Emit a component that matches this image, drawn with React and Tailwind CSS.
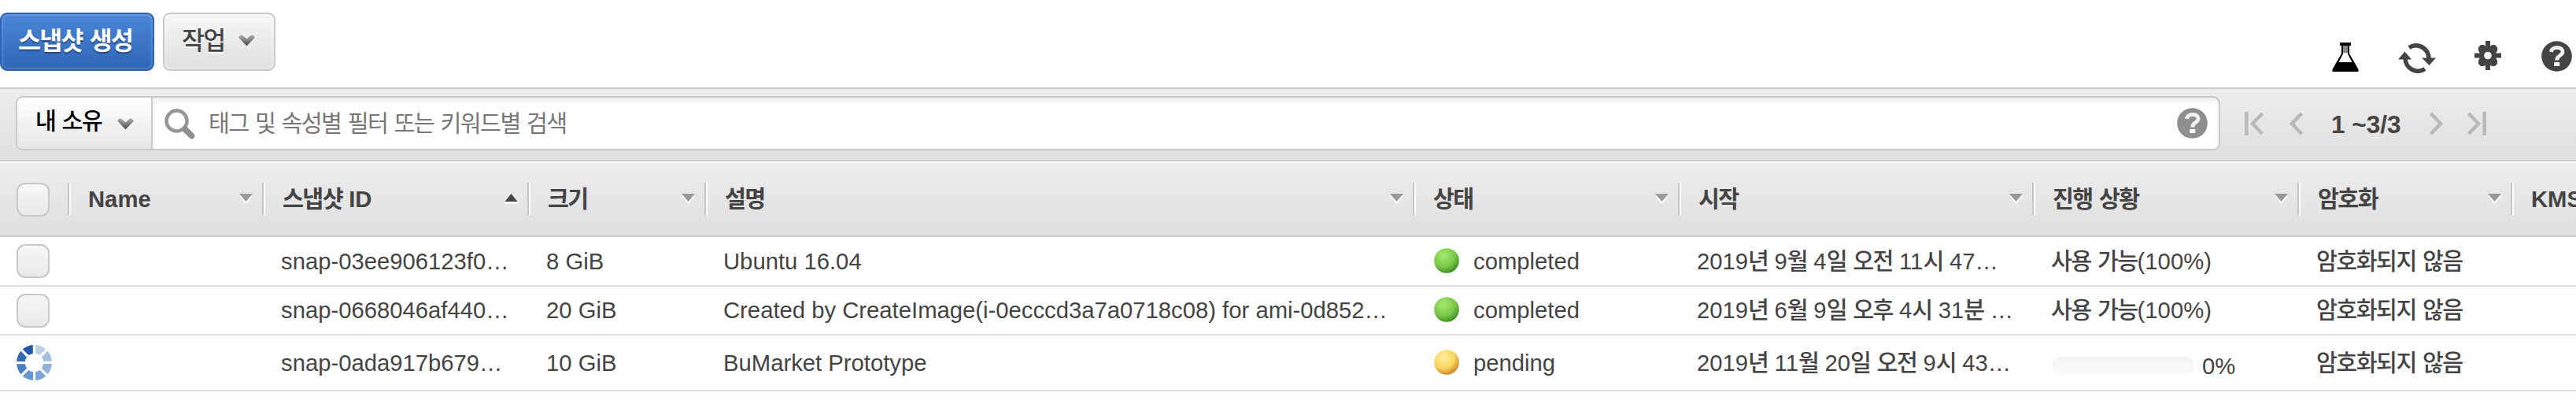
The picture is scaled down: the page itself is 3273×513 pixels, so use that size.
const KR = "font-['Liberation_Sans','Noto_Sans_CJK_KR',sans-serif]";

// Hangul runs are set slightly tighter than the Latin ones.
function T({ children }) {
  return (
    <span>
      {String(children)
        .split(/([\uac00-\ud7a3]+)/)
        .filter(Boolean)
        .map((s, i) => (
          <span key={i} className={/[\uac00-\ud7a3]/.test(s) ? 'tracking-[-0.053em]' : ''}>{s}</span>
        ))}
    </span>
  );
}

function Chevron({ className }) {
  return (
    <svg width="21" height="15" viewBox="0 0 21 15" className={className}>
      <defs>
        <linearGradient id="chev" x1="0" y1="0" x2="0" y2="1">
          <stop offset="0" stopColor="#b0b0b0" />
          <stop offset="1" stopColor="#484848" />
        </linearGradient>
      </defs>
      <path d="M0 3.5 L2.500 0.500 H5 L10.500 5.500 L16 0.500 H18.500 L21 3.500 L10.500 14.500 Z" fill="url(#chev)" />
    </svg>
  );
}

function Help({ className, fill }) {
  return (
    <svg width="39" height="39" viewBox="0 0 39 39" className={className}>
      <circle cx="19.5" cy="19.5" r="19.3" fill={fill} />
      <path d="M12.500 14 C13 6.500 27 6.500 27 14 C27 18.500 19.600 18.500 19.600 24.500" fill="none" stroke="#f2f2f2" strokeWidth="4.800" />
      <rect x="16.2" y="27" width="7" height="5" fill="#fff" />
    </svg>
  );
}

const checkbox = 'block w-[42px] h-[43px] rounded-[11px] border-2 border-[#c8c8c8] bg-linear-to-b from-[#f7f7f7] to-[#e9e9e9]';

function Spinner() {
  const colors = ['#bdd1ea', '#a3bfe2', '#8fb1de', '#79a3d9', '#6594d1', '#4c80c6', '#3469b8', '#2458ad'];
  return (
    <svg width="45" height="45" viewBox="-23 -23 46 46">
      {colors.map((c, i) => (
        <path key={c} d="M1.600 -22.900 A23 23 0 0 1 15 -17.400 L7.200 -9.600 A12 12 0 0 0 1.600 -12 Z" fill={c} transform={`rotate(${i * 45})`} />
      ))}
    </svg>
  );
}

function Dot({ color }) {
  const id = `dot-${color}`;
  const [a, b, c] = color === 'green' ? ['#a4ec70', '#7ac74b', '#3d8f20'] : ['#fff29a', '#fad35c', '#c8862a'];
  return (
    <svg width="32" height="32" viewBox="0 0 32 32" className="shrink-0 -mt-[2px]">
      <defs>
        <radialGradient id={id} cx="0.38" cy="0.3" r="0.72">
          <stop offset="0" stopColor={a} />
          <stop offset="0.62" stopColor={b} />
          <stop offset="1" stopColor={c} />
        </radialGradient>
      </defs>
      <circle cx="16" cy="16" r="15.8" fill={`url(#${id})`} />
    </svg>
  );
}

const cols = [
  { label: 'Name', w: 'w-[247px]' },
  { label: '스냅샷 ID', w: 'w-[337px]', up: true },
  { label: '크기', w: 'w-[225px]' },
  { label: '설명', w: 'w-[900px]' },
  { label: '상태', w: 'w-[337px]' },
  { label: '시작', w: 'w-[450px]' },
  { label: '진행 상황', w: 'w-[337px]' },
  { label: '암호화', w: 'w-[271px]' },
  { label: 'KMS', w: 'w-[140px]', last: true },
];

const rows = [
  { id: 'snap-03ee906123f0…', size: '8 GiB', desc: 'Ubuntu 16.04', state: 'completed', start: '2019년 9월 4일 오전 11시 47…', h: 'h-[63px]' },
  { id: 'snap-0668046af440…', size: '20 GiB', desc: 'Created by CreateImage(i-0ecccd3a7a0718c08) for ami-0d852…', state: 'completed', start: '2019년 6월 9일 오후 4시 31분 …', h: 'h-[62px]' },
  { id: 'snap-0ada917b679…', size: '10 GiB', desc: 'BuMarket Prototype', state: 'pending', start: '2019년 11월 20일 오전 9시 43…', h: 'h-[71px]' },
];

function Row({ r }) {
  const pending = r.state === 'pending';
  return (
    <div className={`flex items-center border-b-2 border-[#dedede] font-medium ${r.h}`}>
      <div className="w-[86px] shrink-0 pl-[21px]">{pending ? <Spinner /> : <span className={checkbox} />}</div>
      <div className="w-[271px] shrink-0" />
      <div className="w-[337px] shrink-0">{r.id}</div>
      <div className="w-[225px] shrink-0">{r.size}</div>
      <div className="w-[903px] shrink-0">{r.desc}</div>
      <div className="w-[334px] shrink-0 flex items-center gap-[18px]">
        <Dot color={pending ? 'yellow' : 'green'} />
        {r.state}
      </div>
      <div className="w-[450px] shrink-0"><T>{r.start}</T></div>
      <div className="w-[337px] shrink-0">
        {pending ? (
          <div className="flex items-center gap-[10px] pt-[8px] pl-[1px]">
            <span className="w-[181px] h-[22px] rounded-[10px] mt-[-2px] bg-linear-to-b from-[#f3f3f3] to-[#fafafa]" />
            0%
          </div>
        ) : (
          <T>사용 가능(100%)</T>
        )}
      </div>
      <div><T>암호화되지 않음</T></div>
    </div>
  );
}

export default function App() {
  return (
    <div className={`w-[3273px] h-[513px] overflow-hidden bg-white text-[29.25px] leading-[36px] whitespace-nowrap text-[#444] ${KR}`}>
      <div className="h-[111px] flex items-start pt-[16px]">
        <button className="w-[196px] h-[74px] shrink-0 rounded-[9px] border-2 border-[#2a62b5] bg-linear-to-b from-[#4b86d8] to-[#2f66b7] text-white font-bold text-[31.5px] text-left pl-[21px] pb-[3px] shadow-[inset_0_0_4px_rgba(255,255,255,0.35)] [text-shadow:0_2px_1px_rgba(0,0,0,0.35)]">
          <T>스냅샷 생성</T>
        </button>
        <button className="ml-[11px] w-[143px] h-[74px] shrink-0 rounded-[9px] border-2 border-[#c9c9c9] bg-linear-to-b from-[#f7f7f7] to-[#dfdfdf] font-medium text-[31.5px] flex items-center pl-[22px] pb-[3px] shadow-[inset_0_0_5px_rgba(255,255,255,0.8)] [text-shadow:0_2px_0_#fff]">
          <T>작업</T>
          <Chevron className="ml-[17px] mt-[-1px]" />
        </button>
        <div className="ml-auto flex items-start pt-[36px] pr-[5px]">
          <svg width="34" height="37" viewBox="0 0 34 37" className="mt-[2px]">
            <path d="M10 0 H24 V4 H22 V14 L33.500 34 V37 H0.500 V34 L12 14 V4 H10 Z" fill="#000" />
            <path d="M14 4 H20 V14.500 L25.500 25 H8.500 L14 14.500 Z" fill="#fff" />
            <rect x="14" y="4" width="6" height="9" fill="#888" />
          </svg>
          <svg width="48" height="38" viewBox="0 0 48 38" className="ml-[50px] mt-[3px]">
            <path d="M14 5.500 C25 -1.500 38.500 6 39 19" fill="none" stroke="#444" strokeWidth="5.500" />
            <path d="M30 18.500 H48 L39.500 28 Z" fill="#444" />
            <path d="M34 32.500 C23 39.500 9.500 32 9 19" fill="none" stroke="#444" strokeWidth="5.500" />
            <path d="M0 20.500 H17 L8.500 10.500 Z" fill="#444" />
          </svg>
          <svg width="34" height="37" viewBox="0 0 34 37" className="ml-[49px]">
            <path d="M14 0 H20 V37 H14 Z M0 15.500 H34 V21.500 H0 Z M5 8 L8 5 H12 L14 7 H20 L22 5 H26 L29 8 V12 L27.500 15 V22 L29 25 V29 L26 32 H22 L20 30.500 H14 L12 32 H8 L5 29 V25 L6.500 22 V15 L5 12 Z" fill="#444" />
            <circle cx="17" cy="18.500" r="4.800" fill="#fff" />
          </svg>
          <Help fill="#444" className="ml-[51px]" />
        </div>
      </div>

      <div className="h-[94px] flex items-start border-y-2 border-[#ccc] bg-linear-to-b from-[#ededed] to-[#dfdfdf] pt-[9px] pl-[20px]">
        <div className="w-[2801px] h-[69px] shrink-0 flex rounded-[9px] border-2 border-[#c9c9c9] bg-white overflow-hidden">
          <div className="w-[172px] shrink-0 border-r-2 border-[#c9c9c9] bg-linear-to-b from-white to-[#e6e6e6] text-black font-medium flex items-center pl-[23px] pb-[5px]">
            <T>내 소유</T>
            <Chevron className="ml-[20px] mt-[7px]" />
          </div>
          <div className="flex-1 flex items-center pl-[15px] pr-[14px] text-[#777] shadow-[inset_0_4px_6px_rgba(0,0,0,0.08)]">
            <svg width="40" height="40" viewBox="0 0 40 40" className="mt-[3px]">
              <circle cx="15.500" cy="15.500" r="13" fill="none" stroke="#959595" strokeWidth="4.500" />
              <path d="M26 26 L34.500 34.500" stroke="#8e8e8e" strokeWidth="7.500" strokeLinecap="round" />
            </svg>
            <div className="ml-[16px] flex-1"><T>태그 및 속성별 필터 또는 키워드별 검색</T></div>
            <Help fill="#8f8f8f" />
          </div>
        </div>
        <div className="flex items-center h-[69px] pl-[31px] text-[31.5px] font-bold">
          <svg width="24" height="30" viewBox="0 0 24 30" fill="none" stroke="#b9b9b9" strokeWidth="4.500"><path d="M2.300 0 V30 M22.500 2 L10 15 L22.500 28" /></svg>
          <svg width="17" height="30" viewBox="0 0 17 30" fill="none" stroke="#b9b9b9" strokeWidth="4.500" className="ml-[33px]"><path d="M15.500 2 L3 15 L15.500 28" /></svg>
          <span className="ml-[36px] mt-[2px]">1 ~3/3</span>
          <svg width="17" height="30" viewBox="0 0 17 30" fill="none" stroke="#b9b9b9" strokeWidth="4.500" className="ml-[37px]"><path d="M1.500 2 L14 15 L1.500 28" /></svg>
          <svg width="24" height="30" viewBox="0 0 24 30" fill="none" stroke="#b9b9b9" strokeWidth="4.500" className="ml-[31px]"><path d="M21.700 0 V30 M1.500 2 L14 15 L1.500 28" /></svg>
        </div>
      </div>

      <div className="h-[94px] mt-[2px] flex items-start bg-linear-to-b from-[#ededed] to-[#dfdfdf] border-b-2 border-[#c9c9c9] font-bold pt-[25px]">
        <div className="w-[86px] shrink-0 pl-[21px]"><span className={checkbox} /></div>
        {cols.map((c) => (
          <div key={c.label} className={`shrink-0 h-[41px] flex items-center border-l-2 border-[#c4c4c4] ${c.w}`}>
            <span className="w-[2px] h-full bg-white" />
            <span className="pl-[22px] flex-1"><T>{c.label}</T></span>
            {!c.last && (
              <svg width="17" height="13" viewBox="0 0 17 13" className="mr-[12px]">
                {c.up ? (
                  <>
                    <path d="M0 10 H17 V12.500 H0 Z" fill="#fff" />
                    <path d="M0.500 10 L8.500 0 L16.500 10 Z" fill="#444" />
                  </>
                ) : (
                  <>
                    <path d="M0 2.500 H17 L8.500 13 Z" fill="#fff" />
                    <path d="M0 0 H17 L8.500 10 Z" fill="#999" />
                  </>
                )}
              </svg>
            )}
          </div>
        ))}
      </div>

      {rows.map((r) => (
        <Row key={r.id} r={r} />
      ))}
    </div>
  );
}
